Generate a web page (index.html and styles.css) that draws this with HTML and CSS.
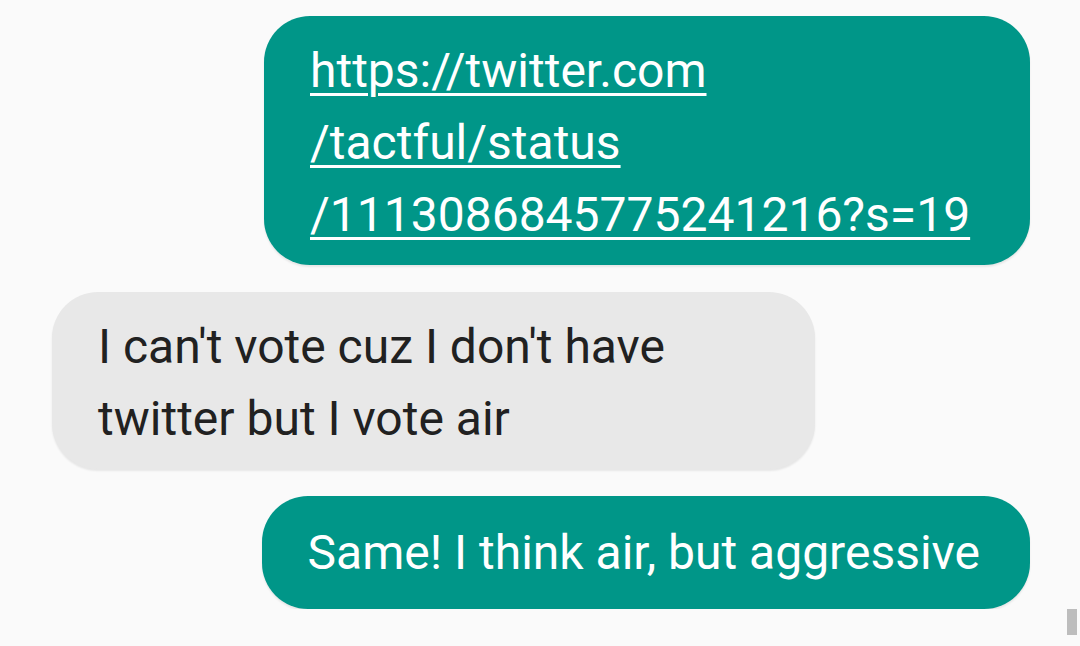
FILE: index.html
```html
<!DOCTYPE html>
<html>
<head>
  <title>Messages</title>
  <link rel="stylesheet" href="styles.css">
</head>
<body>
  <div class="thread">
    <div class="bubble outgoing wide">
      <a class="link" href="#">https://twitter.com<br>/tactful/status<br>/1113086845775241216?s=19</a>
    </div>
    <div class="bubble incoming">I can't vote cuz I don't have twitter but I vote air</div>
    <div class="bubble outgoing single">Same! I think air, but aggressive</div>
  </div>
  <div class="scroll-thumb"></div>
</body>
</html>
```

FILE: styles.css
```css
body {
  margin: 0;
  background: #fafafa;
  font-family: Roboto, "Noto Sans", sans-serif;
  overflow: hidden;
}

.thread {
  display: flex;
  flex-direction: column;
  gap: 27px;
  padding: 16px 50px 0 52px;
}

.bubble {
  max-width: 763px;
  box-sizing: border-box;
  padding: 19px 50px 14px 46px;
  border-radius: 46px;
  font-size: 48px;
  line-height: 72px;
  box-shadow: 0 2px 2px rgba(0, 0, 0, 0.08);
}

.outgoing {
  align-self: flex-end;
  background: #009688;
  color: #fff;
}

.incoming {
  align-self: flex-start;
  background: #e8e8e8;
  color: #212121;
}

.wide {
  width: 766px;
  max-width: none;
}

.single {
  max-width: none;
  min-height: 113px;
  padding-top: 0;
  padding-bottom: 0;
  display: flex;
  align-items: center;
  white-space: nowrap;
}

.link {
  color: #fff;
  text-decoration: underline;
  text-decoration-thickness: 3px;
  text-underline-offset: 6px;
}

.scroll-thumb {
  position: absolute;
  left: 1067px;
  top: 609px;
  width: 10px;
  height: 26px;
  background: #bdbdbd;
}
```
